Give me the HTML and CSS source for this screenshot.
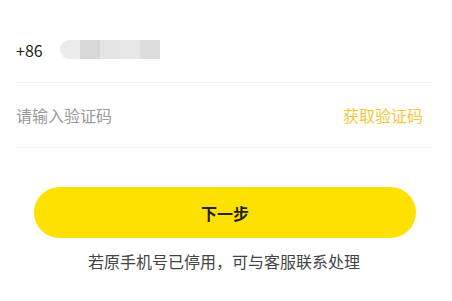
FILE: index.html
```html
<!DOCTYPE html>
<html>
<head>
    <title>验证手机号</title>
    <link rel="stylesheet" href="styles.css">
</head>
<body>
    <div class="container">
        <div class="field phone-row">
            <span class="area-code">+86</span>
            <div class="masked">
                <span class="blk b1"></span>
                <span class="blk b2"></span>
                <span class="blk b3"></span>
                <span class="blk b4"></span>
                <span class="blk b5"></span>
            </div>
        </div>
        <div class="field code-row">
            <input type="text" class="code-input" placeholder="请输入验证码">
            <a class="get-code">获取验证码</a>
        </div>
        <button type="button" class="next-btn">下一步</button>
        <p class="tip">若原手机号已停用，可与客服联系处理</p>
    </div>
</body>
</html>
```

FILE: styles.css
```css
body {
    margin: 0;
    background: #fff;
    font-family: "Noto Sans CJK SC", "Noto Sans", sans-serif;
}

.container {
    padding: 18px 20px 0 16px;
}

.field {
    display: flex;
    align-items: center;
    height: 64px;
    border-bottom: 1px solid #f2f2f2;
}

.area-code {
    font-size: 16px;
    color: #222;
    width: 44px;
}

.masked {
    display: flex;
    height: 19px;
    margin-top: -1px;
}

.blk {
    width: 20px;
    height: 19px;
}

.b1 {
    background: #ececec;
    border-radius: 10px 0 0 10px;
}

.b2 {
    background: #d8d8d8;
}

.b3 {
    background: #e4e4e4;
}

.b4 {
    background: #e6e6e6;
}

.b5 {
    background: #dcdcdc;
}

.code-row {
    justify-content: space-between;
}

.code-input {
    border: none;
    outline: none;
    padding: 0;
    font-family: inherit;
    font-size: 16px;
    color: #222;
    width: 200px;
}

.code-input::placeholder {
    color: #999;
}

.get-code {
    font-size: 16px;
    color: #f8c53a;
    margin-right: 9px;
}

.next-btn {
    display: block;
    width: 382px;
    height: 51px;
    margin: 39px 0 0 18px;
    border: none;
    border-radius: 26px;
    background: #ffe100;
    color: #222;
    font-family: inherit;
    font-size: 16px;
    font-weight: bold;
}

.tip {
    margin: 11px 0 0;
    text-align: center;
    font-size: 16px;
    color: #444;
}
```
